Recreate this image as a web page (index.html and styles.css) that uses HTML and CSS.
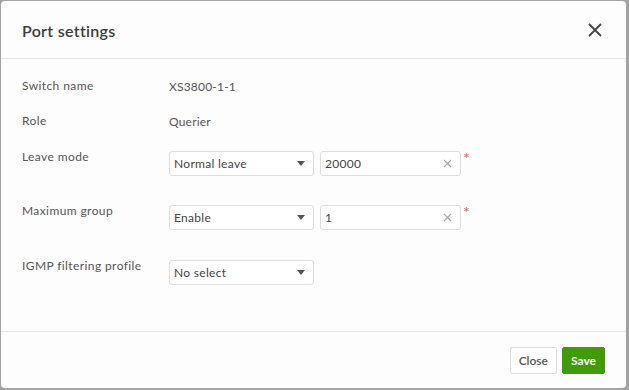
FILE: index.html
```html
<!DOCTYPE html>
<html lang="en">
<head>
  <meta charset="UTF-8">
  <meta name="viewport" content="width=device-width, initial-scale=1.0">
  <title>Port settings</title>
  <link rel="stylesheet" href="styles.css">
</head>
<body>

<div class="dialog">
  <div class="dialog-header">
    <h2>Port settings</h2>
    <button class="btn-x" aria-label="Close">
      <svg width="14" height="14" viewBox="0 0 14 14"><path d="M1 1L13 13M13 1L1 13" stroke="#444" stroke-width="1.8" fill="none"/></svg>
    </button>
  </div>

  <div class="dialog-body">
    <div class="row row-text">
      <div class="label">Switch name</div>
      <div class="value">XS3800-1-1</div>
    </div>
    <div class="row row-text row-role">
      <div class="label">Role</div>
      <div class="value">Querier</div>
    </div>
    <div class="row row-leave">
      <div class="label">Leave mode</div>
      <div class="field select">Normal leave <span class="caret"></span></div>
      <div class="field input">20000
        <svg class="clear" width="9" height="9" viewBox="0 0 9 9"><path d="M1 1L8 8M8 1L1 8" stroke="#aaa" stroke-width="1.2" fill="none"/></svg>
      </div>
      <span class="req">*</span>
    </div>
    <div class="row row-max">
      <div class="label">Maximum group</div>
      <div class="field select">Enable <span class="caret"></span></div>
      <div class="field input">1
        <svg class="clear" width="9" height="9" viewBox="0 0 9 9"><path d="M1 1L8 8M8 1L1 8" stroke="#aaa" stroke-width="1.2" fill="none"/></svg>
      </div>
      <span class="req">*</span>
    </div>
    <div class="row">
      <div class="label">IGMP filtering profile</div>
      <div class="field select">No select <span class="caret"></span></div>
    </div>
  </div>

  <div class="dialog-footer">
    <button class="btn btn-close">Close</button>
    <button class="btn btn-save">Save</button>
  </div>
</div>

</body>
</html>
```

FILE: styles.css
```css
* { margin: 0; padding: 0; box-sizing: border-box; font-family: 'Lato', 'Noto Sans', sans-serif; }
body {
  background: #a3a3a3;
  width: 629px;
  height: 390px;
  overflow: hidden;
}

.dialog {
  margin: 1px 3px 0 1px;
  height: 387px;
  background: #fdfdfd;
  border-radius: 4px;
  display: flex;
  flex-direction: column;
}

.dialog-header {
  height: 58px;
  border-bottom: 1px solid #e4e4e4;
  padding: 0 24px 0 21px;
  display: flex; align-items: center; justify-content: space-between;
}
.dialog-header h2 {
  font-size: 16px; font-weight: 600; color: #3c3c3c;
  letter-spacing: 0.3px;
  margin-top: 1px;
}
.btn-x { background: none; border: none; display: flex; cursor: pointer; }

.dialog-body {
  flex: 1;
  padding: 15px 21px 0 21px;
}

.row { display: flex; align-items: flex-start; }
.row-text { height: 24px; align-items: center; margin-bottom: 11px; }
.row-role { margin-bottom: 18px; }
.row-leave { margin-bottom: 29px; }
.row-max { margin-bottom: 30px; }

.label {
  width: 147px;
  font-size: 12px; color: #555;
  line-height: 12px;
  letter-spacing: 0.4px;
}
.row-text .label { line-height: 24px; }
.value { font-size: 12px; color: #555; letter-spacing: 0.2px; }

.field {
  height: 25px;
  border: 1px solid #dedede;
  border-radius: 3px;
  background: #fff;
  font-size: 12px; color: #444;
  letter-spacing: 0.3px;
  padding: 0 4px;
  display: flex; align-items: center; justify-content: space-between;
}
.select { width: 145px; padding-right: 8px; }
.input { width: 141px; margin-left: 6px; padding-right: 8px; }

.caret {
  width: 0; height: 0;
  border-left: 4px solid transparent;
  border-right: 4px solid transparent;
  border-top: 5px solid #555;
}

.req { color: #f0506e; font-size: 16px; margin-left: 2px; line-height: 14px; }

.dialog-footer {
  height: 57px;
  border-top: 1px solid #e4e4e4;
  padding: 0 21px 0 0;
  display: flex; align-items: center; justify-content: flex-end;
  gap: 5px;
}
.btn {
  height: 27px;
  border-radius: 2px;
  font-size: 12px;
  font-weight: 600;
  padding: 0 8px;
  cursor: pointer;
}
.btn-close { background: #fff; border: 1px solid #ddd; color: #555; }
.btn-save { background: #3e9c06; border: 1px solid #3e9c06; color: #fff; font-weight: 700; }
```
